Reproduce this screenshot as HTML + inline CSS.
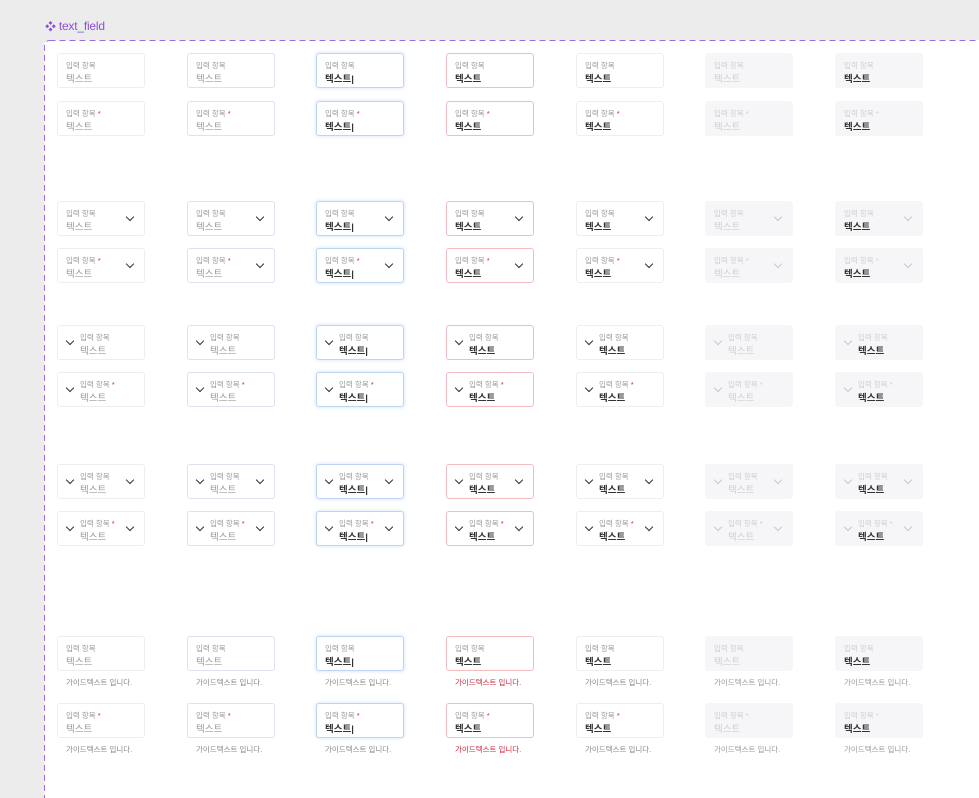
<!DOCTYPE html>
<html><head><meta charset="utf-8"><style>
*{margin:0;padding:0;box-sizing:border-box}
html,body{width:979px;height:798px;overflow:hidden}
body{background:#ececec;position:relative;font-family:"Liberation Sans","Noto Sans CJK KR",sans-serif}
.ttl{position:absolute;left:45px;top:18px;font-size:12px;color:#8b4fd6;letter-spacing:-0.2px}
.ttl span{font-size:11px;margin-right:3px}
.frame{position:absolute;left:44px;top:40px;width:960px;height:780px;background:#fff;border-radius:5px}
.fsvg{position:absolute;left:44px;top:40px}
.row{position:absolute;left:0;top:0;width:979px}
.b{position:absolute;width:88px;height:35px;border:1px solid #eee;border-radius:3px;background:#fff}
.k0{left:57px}.k1{left:187px;border-color:#dde1f2}.k2{left:316px;border:1.5px solid #bfd4f4;box-shadow:0 0 3px 1px #e2ecfb}
.k3{left:446px;border-color:#f2bcc4}.k4{left:576px}.k5{left:705px;background:#f6f6f8;border-color:#f6f6f8}.k6{left:835px;background:#f6f6f8;border-color:#f6f6f8}
.lb{position:absolute;left:8px;top:6px;font-size:7.5px;color:#9a9a9a;white-space:nowrap}
.lb b{color:#d0283c;font-weight:normal;margin-left:2px}
.v{position:absolute;left:8px;top:17px;font-size:9.5px;color:#9a9a9a;white-space:nowrap}
.k2 .v,.k3 .v,.k4 .v,.k6 .v{color:#333;font-weight:bold}
.k5 .lb,.k5 .v,.k5 .lb b,.k6 .lb,.k6 .lb b{color:#cfcfd4}
.L .lb,.L .v{left:22px}
.R::after,.L::before{content:"";position:absolute;top:12px;width:5px;height:5px;border-right:1.3px solid #333;border-bottom:1.3px solid #333;transform:rotate(45deg)}
.R::after{right:11px}.L::before{left:9px}
.k5.R::after,.k5.L::before,.k6.R::after,.k6.L::before{border-color:#c8c8ce}
.h{position:absolute;top:40px;left:8px;font-size:7.5px;color:#888;white-space:nowrap}
.k3 .h{color:#d0283c}
.k5 .h,.k6 .h{color:#999}
</style></head><body>
<div class="ttl"><span>❖</span>text_field</div>
<div class="frame"></div>
<svg class="fsvg" width="960" height="780"><rect x="0.5" y="0.5" width="958" height="778" rx="5" fill="none" stroke="#9b6fe0" stroke-width="1" stroke-dasharray="6 4"/></svg>

<!-- group 1 -->
<div class="row" style="top:53px">
<div class="b k0"><div class="lb">입력 항목</div><div class="v">텍스트</div></div>
<div class="b k1"><div class="lb">입력 항목</div><div class="v">텍스트</div></div>
<div class="b k2"><div class="lb">입력 항목</div><div class="v">텍스트|</div></div>
<div class="b k3"><div class="lb">입력 항목</div><div class="v">텍스트</div></div>
<div class="b k4"><div class="lb">입력 항목</div><div class="v">텍스트</div></div>
<div class="b k5"><div class="lb">입력 항목</div><div class="v">텍스트</div></div>
<div class="b k6"><div class="lb">입력 항목</div><div class="v">텍스트</div></div>
</div>
<div class="row" style="top:101px">
<div class="b k0"><div class="lb">입력 항목<b>*</b></div><div class="v">텍스트</div></div>
<div class="b k1"><div class="lb">입력 항목<b>*</b></div><div class="v">텍스트</div></div>
<div class="b k2"><div class="lb">입력 항목<b>*</b></div><div class="v">텍스트|</div></div>
<div class="b k3"><div class="lb">입력 항목<b>*</b></div><div class="v">텍스트</div></div>
<div class="b k4"><div class="lb">입력 항목<b>*</b></div><div class="v">텍스트</div></div>
<div class="b k5"><div class="lb">입력 항목<b>*</b></div><div class="v">텍스트</div></div>
<div class="b k6"><div class="lb">입력 항목<b>*</b></div><div class="v">텍스트</div></div>
</div>

<!-- group 2 right chevron -->
<div class="row" style="top:201px">
<div class="b k0 R"><div class="lb">입력 항목</div><div class="v">텍스트</div></div>
<div class="b k1 R"><div class="lb">입력 항목</div><div class="v">텍스트</div></div>
<div class="b k2 R"><div class="lb">입력 항목</div><div class="v">텍스트|</div></div>
<div class="b k3 R"><div class="lb">입력 항목</div><div class="v">텍스트</div></div>
<div class="b k4 R"><div class="lb">입력 항목</div><div class="v">텍스트</div></div>
<div class="b k5 R"><div class="lb">입력 항목</div><div class="v">텍스트</div></div>
<div class="b k6 R"><div class="lb">입력 항목</div><div class="v">텍스트</div></div>
</div>
<div class="row" style="top:248px">
<div class="b k0 R"><div class="lb">입력 항목<b>*</b></div><div class="v">텍스트</div></div>
<div class="b k1 R"><div class="lb">입력 항목<b>*</b></div><div class="v">텍스트</div></div>
<div class="b k2 R"><div class="lb">입력 항목<b>*</b></div><div class="v">텍스트|</div></div>
<div class="b k3 R"><div class="lb">입력 항목<b>*</b></div><div class="v">텍스트</div></div>
<div class="b k4 R"><div class="lb">입력 항목<b>*</b></div><div class="v">텍스트</div></div>
<div class="b k5 R"><div class="lb">입력 항목<b>*</b></div><div class="v">텍스트</div></div>
<div class="b k6 R"><div class="lb">입력 항목<b>*</b></div><div class="v">텍스트</div></div>
</div>

<!-- group 3 left chevron -->
<div class="row" style="top:325px">
<div class="b k0 L"><div class="lb">입력 항목</div><div class="v">텍스트</div></div>
<div class="b k1 L"><div class="lb">입력 항목</div><div class="v">텍스트</div></div>
<div class="b k2 L"><div class="lb">입력 항목</div><div class="v">텍스트|</div></div>
<div class="b k3 L"><div class="lb">입력 항목</div><div class="v">텍스트</div></div>
<div class="b k4 L"><div class="lb">입력 항목</div><div class="v">텍스트</div></div>
<div class="b k5 L"><div class="lb">입력 항목</div><div class="v">텍스트</div></div>
<div class="b k6 L"><div class="lb">입력 항목</div><div class="v">텍스트</div></div>
</div>
<div class="row" style="top:372px">
<div class="b k0 L"><div class="lb">입력 항목<b>*</b></div><div class="v">텍스트</div></div>
<div class="b k1 L"><div class="lb">입력 항목<b>*</b></div><div class="v">텍스트</div></div>
<div class="b k2 L"><div class="lb">입력 항목<b>*</b></div><div class="v">텍스트|</div></div>
<div class="b k3 L"><div class="lb">입력 항목<b>*</b></div><div class="v">텍스트</div></div>
<div class="b k4 L"><div class="lb">입력 항목<b>*</b></div><div class="v">텍스트</div></div>
<div class="b k5 L"><div class="lb">입력 항목<b>*</b></div><div class="v">텍스트</div></div>
<div class="b k6 L"><div class="lb">입력 항목<b>*</b></div><div class="v">텍스트</div></div>
</div>

<!-- group 4 both -->
<div class="row" style="top:464px">
<div class="b k0 L R"><div class="lb">입력 항목</div><div class="v">텍스트</div></div>
<div class="b k1 L R"><div class="lb">입력 항목</div><div class="v">텍스트</div></div>
<div class="b k2 L R"><div class="lb">입력 항목</div><div class="v">텍스트|</div></div>
<div class="b k3 L R"><div class="lb">입력 항목</div><div class="v">텍스트</div></div>
<div class="b k4 L R"><div class="lb">입력 항목</div><div class="v">텍스트</div></div>
<div class="b k5 L R"><div class="lb">입력 항목</div><div class="v">텍스트</div></div>
<div class="b k6 L R"><div class="lb">입력 항목</div><div class="v">텍스트</div></div>
</div>
<div class="row" style="top:511px">
<div class="b k0 L R"><div class="lb">입력 항목<b>*</b></div><div class="v">텍스트</div></div>
<div class="b k1 L R"><div class="lb">입력 항목<b>*</b></div><div class="v">텍스트</div></div>
<div class="b k2 L R"><div class="lb">입력 항목<b>*</b></div><div class="v">텍스트|</div></div>
<div class="b k3 L R"><div class="lb">입력 항목<b>*</b></div><div class="v">텍스트</div></div>
<div class="b k4 L R"><div class="lb">입력 항목<b>*</b></div><div class="v">텍스트</div></div>
<div class="b k5 L R"><div class="lb">입력 항목<b>*</b></div><div class="v">텍스트</div></div>
<div class="b k6 L R"><div class="lb">입력 항목<b>*</b></div><div class="v">텍스트</div></div>
</div>

<!-- group 5 helper -->
<div class="row" style="top:636px">
<div class="b k0"><div class="lb">입력 항목</div><div class="v">텍스트</div><div class="h">가이드텍스트 입니다.</div></div>
<div class="b k1"><div class="lb">입력 항목</div><div class="v">텍스트</div><div class="h">가이드텍스트 입니다.</div></div>
<div class="b k2"><div class="lb">입력 항목</div><div class="v">텍스트|</div><div class="h">가이드텍스트 입니다.</div></div>
<div class="b k3"><div class="lb">입력 항목</div><div class="v">텍스트</div><div class="h">가이드텍스트 입니다.</div></div>
<div class="b k4"><div class="lb">입력 항목</div><div class="v">텍스트</div><div class="h">가이드텍스트 입니다.</div></div>
<div class="b k5"><div class="lb">입력 항목</div><div class="v">텍스트</div><div class="h">가이드텍스트 입니다.</div></div>
<div class="b k6"><div class="lb">입력 항목</div><div class="v">텍스트</div><div class="h">가이드텍스트 입니다.</div></div>
</div>
<div class="row" style="top:703px">
<div class="b k0"><div class="lb">입력 항목<b>*</b></div><div class="v">텍스트</div><div class="h">가이드텍스트 입니다.</div></div>
<div class="b k1"><div class="lb">입력 항목<b>*</b></div><div class="v">텍스트</div><div class="h">가이드텍스트 입니다.</div></div>
<div class="b k2"><div class="lb">입력 항목<b>*</b></div><div class="v">텍스트|</div><div class="h">가이드텍스트 입니다.</div></div>
<div class="b k3"><div class="lb">입력 항목<b>*</b></div><div class="v">텍스트</div><div class="h">가이드텍스트 입니다.</div></div>
<div class="b k4"><div class="lb">입력 항목<b>*</b></div><div class="v">텍스트</div><div class="h">가이드텍스트 입니다.</div></div>
<div class="b k5"><div class="lb">입력 항목<b>*</b></div><div class="v">텍스트</div><div class="h">가이드텍스트 입니다.</div></div>
<div class="b k6"><div class="lb">입력 항목<b>*</b></div><div class="v">텍스트</div><div class="h">가이드텍스트 입니다.</div></div>
</div>
</body></html>
